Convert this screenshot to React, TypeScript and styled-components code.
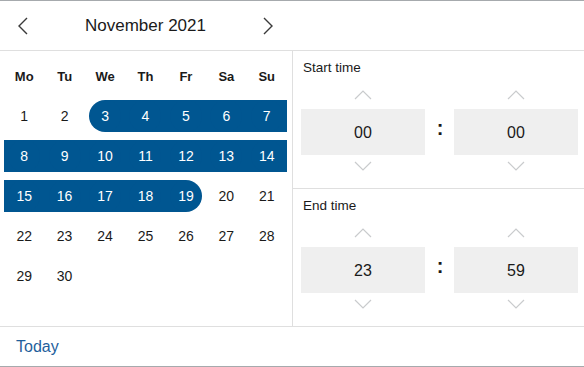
import styled, { createGlobalStyle } from 'styled-components';

const GlobalStyle = createGlobalStyle`
  body {
    margin: 0;
    background: #ffffff;
    font-family: "Liberation Sans", Arial, sans-serif;
    color: #1a1a1a;
  }
  * {
    box-sizing: border-box;
  }
`;

const BLUE = '#005691';
const LINE = '#dfdfdf';

const Picker = styled.div`
  width: 584px;
  height: 367px;
  border-top: 1px solid #a6aaad;
  border-bottom: 1px solid #a6aaad;
  display: flex;
  flex-direction: column;
`;

const Header = styled.header`
  height: 50px;
  border-bottom: 1px solid ${LINE};
  display: flex;
`;

const MonthNav = styled.div`
  width: 292px;
  display: flex;
  align-items: center;
  justify-content: space-between;
  padding: 0 13px 0 12px;
`;

const NavButton = styled.button`
  width: 22px;
  height: 30px;
  border: none;
  background: none;
  padding: 0;
  display: flex;
  align-items: center;
  justify-content: center;
  cursor: pointer;
`;

const MonthTitle = styled.h2`
  margin: 0;
  font-size: 17px;
  font-weight: 400;
  color: #1a1a1a;
`;

const Main = styled.main`
  height: 276px;
  border-bottom: 1px solid ${LINE};
  display: grid;
  grid-template-columns: 293px 1fr;
`;

const Calendar = styled.section`
  border-right: 1px solid ${LINE};
  padding: 9px 5px 0 4px;
`;

const DayGrid = styled.div`
  display: grid;
  grid-template-columns: repeat(7, 1fr);
  grid-auto-rows: 32px;
  row-gap: 8px;
`;

const WeekDay = styled.div`
  display: flex;
  align-items: center;
  justify-content: center;
  font-size: 13px;
  font-weight: 700;
  color: #1a1a1a;
`;

type Range = 'none' | 'start' | 'mid' | 'end';

const DayCell = styled.div<{ $range: Range }>`
  display: flex;
  align-items: center;
  justify-content: center;
  background: ${({ $range }) =>
    $range === 'mid'
      ? BLUE
      : $range === 'start'
      ? `linear-gradient(to right, transparent 50%, ${BLUE} 50%)`
      : $range === 'end'
      ? `linear-gradient(to right, ${BLUE} 50%, transparent 50%)`
      : 'transparent'};
`;

const DayNum = styled.span<{ $active: boolean }>`
  width: 32px;
  height: 32px;
  border-radius: 50%;
  display: flex;
  align-items: center;
  justify-content: center;
  font-size: 14px;
  color: ${({ $active }) => ($active ? '#ffffff' : '#1a1a1a')};
  background: ${({ $active }) => ($active ? BLUE : 'transparent')};
`;

const TimeColumn = styled.div`
  display: flex;
  flex-direction: column;
`;

const TimeSection = styled.section<{ $divider?: boolean }>`
  height: ${({ $divider }) => ($divider ? '138px' : '137px')};
  border-bottom: ${({ $divider }) => ($divider ? `1px solid ${LINE}` : 'none')};
  padding: 9px 6px 0 8px;
`;

const TimeLabel = styled.div`
  height: 16px;
  line-height: 16px;
  font-size: 13.5px;
  color: #1a1a1a;
  margin: 0 0 5px 2px;
`;

const TimeRow = styled.div`
  display: grid;
  grid-template-columns: 124px 1fr 124px;
  align-items: center;
`;

const Spinner = styled.div`
  display: flex;
  flex-direction: column;
`;

const StepButton = styled.button<{ $h: number }>`
  height: ${({ $h }) => $h}px;
  border: none;
  background: none;
  padding: 0;
  display: flex;
  align-items: center;
  justify-content: center;
  cursor: pointer;
`;

const TimeValue = styled.div`
  height: 46px;
  padding-top: 2px;
  background: #efefef;
  display: flex;
  align-items: center;
  justify-content: center;
  font-size: 16px;
  color: #1a1a1a;
`;

const Colon = styled.div`
  text-align: center;
  font-size: 20px;
  font-weight: 700;
  color: #1a1a1a;
  padding: 0 0 2px 1px;
`;

const Footer = styled.footer`
  flex: 1;
  display: flex;
  align-items: center;
  padding: 0 16px;
`;

const TodayLink = styled.button`
  border: none;
  background: none;
  padding: 0;
  font-family: inherit;
  font-size: 16px;
  color: #1f5f9c;
  cursor: pointer;
`;

const Chevron = ({ dir }: { dir: 'left' | 'right' }) => (
  <svg width="12" height="18" viewBox="0 0 12 18">
    <polyline
      points={dir === 'left' ? '10,1 2,9 10,17' : '2,1 10,9 2,17'}
      fill="none"
      stroke="#3a3a3a"
      strokeWidth="1.4"
    />
  </svg>
);

const Caret = ({ dir }: { dir: 'up' | 'down' }) => (
  <svg width="18" height="10" viewBox="0 0 18 10">
    <polyline
      points={dir === 'up' ? '1,9 9,1 17,9' : '1,1 9,9 17,1'}
      fill="none"
      stroke="#c9cbcd"
      strokeWidth="1.2"
    />
  </svg>
);

const weekDays = ['Mo', 'Tu', 'We', 'Th', 'Fr', 'Sa', 'Su'];
const rangeStart = 3;
const rangeEnd = 19;

function rangeOf(day: number): Range {
  if (day === rangeStart) return 'start';
  if (day === rangeEnd) return 'end';
  if (day > rangeStart && day < rangeEnd) {
    return 'mid';
  }
  return 'none';
}

function TimeField({ value }: { value: string }) {
  return (
    <Spinner>
      <StepButton $h={28}>
        <Caret dir="up" />
      </StepButton>
      <TimeValue>{value}</TimeValue>
      <StepButton $h={22}>
        <Caret dir="down" />
      </StepButton>
    </Spinner>
  );
}

function TimePicker({ label, hours, minutes }: { label: string; hours: string; minutes: string }) {
  return (
    <>
      <TimeLabel>{label}</TimeLabel>
      <TimeRow>
        <TimeField value={hours} />
        <Colon>:</Colon>
        <TimeField value={minutes} />
      </TimeRow>
    </>
  );
}

function App() {
  const days = Array.from({ length: 30 }, (_, i) => i + 1);

  return (
    <>
      <GlobalStyle />
      <Picker>
        <Header>
          <MonthNav>
            <NavButton aria-label="Previous month">
              <Chevron dir="left" />
            </NavButton>
            <MonthTitle>November 2021</MonthTitle>
            <NavButton aria-label="Next month">
              <Chevron dir="right" />
            </NavButton>
          </MonthNav>
        </Header>
        <Main>
          <Calendar>
            <DayGrid>
              {weekDays.map((d) => (
                <WeekDay key={d}>{d}</WeekDay>
              ))}
              {days.map((day) => {
                const range = rangeOf(day);
                return (
                  <DayCell key={day} $range={range}>
                    <DayNum $active={range !== 'none'}>{day}</DayNum>
                  </DayCell>
                );
              })}
            </DayGrid>
          </Calendar>
          <TimeColumn>
            <TimeSection $divider>
              <TimePicker label="Start time" hours="00" minutes="00" />
            </TimeSection>
            <TimeSection>
              <TimePicker label="End time" hours="23" minutes="59" />
            </TimeSection>
          </TimeColumn>
        </Main>
        <Footer>
          <TodayLink>Today</TodayLink>
        </Footer>
      </Picker>
    </>
  );
}

export default App;
